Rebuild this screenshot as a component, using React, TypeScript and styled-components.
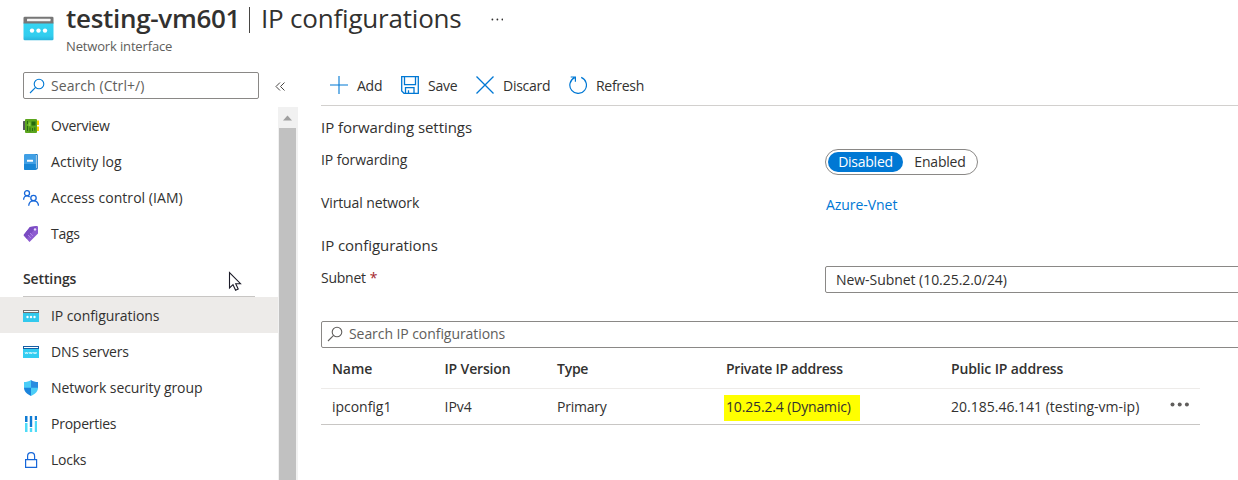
import React from "react";
import styled, { createGlobalStyle } from "styled-components";

const GlobalStyle = createGlobalStyle`
  * { box-sizing: border-box; }
  body {
    margin: 0;
    background: #fff;
    color: #323130;
    font: 14px/20px "Open Sans", "Segoe UI", sans-serif;
    overflow: hidden;
  }
`;

const Text = styled.span<{ $track?: number }>`
  letter-spacing: ${(p) => p.$track ?? -0.25}px;
  white-space: nowrap;
`;

const Page = styled.div`
  width: 1238px;
  height: 480px;
  overflow: hidden;
  position: relative;
  display: flex;
  flex-direction: column;
`;

const Header = styled.header`
  height: 64px;
  flex: none;
  display: flex;
  padding-left: 23px;
`;

const HeaderIcon = styled.div`
  width: 43px;
  padding-top: 16px;
`;

const Titles = styled.div`
  display: flex;
  flex-direction: column;
`;

const Title = styled.h1`
  margin: 0;
  height: 37px;
  font-size: 26px;
  line-height: 37px;
  font-weight: 400;
  display: flex;
`;

const TitleName = styled(Text)`
  font-weight: 600;
  width: 181px;
`;

const TitleBar = styled.i`
  width: 1px;
  height: 26px;
  margin: 7px 11px 0 2px;
  background: #484644;
`;

const Subtitle = styled(Text)`
  font-size: 13px;
  line-height: 18px;
  color: #605e5c;
`;

const HeaderMore = styled.div`
  padding: 17px 0 0 29px;
  line-height: 0;
  svg { display: block; }
`;

const Body = styled.div`
  flex: 1;
  display: flex;
  min-height: 0;
`;

const Sidebar = styled.aside`
  width: 298px;
  flex: none;
  display: flex;
  flex-direction: column;
`;

const SearchRow = styled.div`
  height: 43px;
  flex: none;
  display: flex;
  padding: 8px 0 0 23px;
`;

const SearchBox = styled.div<{ $wide?: boolean }>`
  width: ${(p) => (p.$wide ? "930px" : "236px")};
  height: 27px;
  flex: none;
  border: 1px solid #8a8886;
  border-radius: 2px;
  display: flex;
  align-items: center;
  padding: 0 0 ${(p) => (p.$wide ? 1 : 0)}px 5px;
  gap: 6px;
  color: #605e5c;
`;

const Collapse = styled.div`
  padding: 9px 0 0 16px;
  line-height: 0;
`;

const MenuArea = styled.div`
  flex: 1;
  display: flex;
  min-height: 0;
`;

const Menu = styled.nav`
  width: 278px;
  padding-top: 1px;
  overflow: hidden;
`;

const MenuItem = styled.div<{ $selected?: boolean; $nested?: boolean }>`
  height: 36px;
  padding: ${(p) => (p.$nested ? 2 : 0)}px 0 0 23px;
  display: flex;
  align-items: center;
  gap: 12px;
  background: ${(p) => (p.$selected ? "#edebe9" : "transparent")};
`;

const MenuIcon = styled.svg`
  width: 16px;
  height: 16px;
  flex: none;
`;

const MenuHeading = styled.div`
  height: 45px;
  margin: 0 23px 0 23px;
  padding-top: 17px;
  border-bottom: 1px solid #c8c6c4;
  font-weight: 600;
`;

const ScrollTrack = styled.div`
  width: 20px;
  background: #f1f1f1;
  padding: 0 2px 0 1px;
  display: flex;
  flex-direction: column;
`;

const ScrollArrow = styled.svg`
  width: 17px;
  height: 21px;
`;

const ScrollThumb = styled.div`
  flex: 1;
  background: #c1c1c1;
`;

const Main = styled.main`
  flex: 1;
  min-width: 0;
  padding-left: 23px;
  display: flex;
  flex-direction: column;
`;

const Toolbar = styled.div`
  height: 42px;
  flex: none;
  border-bottom: 1px solid #d2d0ce;
  display: flex;
  align-items: center;
  padding: 1px 0 0 9px;
`;

const Command = styled.div<{ $width: number }>`
  width: ${(p) => p.$width}px;
  height: 20px;
  display: flex;
  align-items: center;
  gap: 9px;
  svg { flex: none; }
  span { padding-top: 1px; }
`;

const SectionTitle = styled.div`
  margin-top: 10px;
  height: 23px;
  flex: none;
  font-size: 15px;
  line-height: 22px;
`;

const Field = styled.div<{ $height: number; $shift?: number }>`
  height: ${(p) => p.$height}px;
  flex: none;
  display: grid;
  grid-template-columns: 504px 1fr;
  padding-top: ${(p) => p.$shift ?? 0}px;
`;

const FieldLabel = styled.span<{ $drop?: number }>`
  padding-top: ${(p) => p.$drop ?? 0}px;
`;

const Required = styled.span`
  color: #a4262c;
  margin-left: 4px;
`;

const Toggle = styled.div`
  width: 153px;
  height: 26px;
  border: 1px solid #8a8886;
  border-radius: 13px;
  padding: 2px;
  display: flex;
`;

const ToggleOption = styled.div<{ $on?: boolean }>`
  width: ${(p) => (p.$on ? 75 : 74)}px;
  flex: none;
  height: 20px;
  border-radius: 10px;
  text-align: center;
  line-height: 20px;
  background: ${(p) => (p.$on ? "#0078d4" : "transparent")};
  color: ${(p) => (p.$on ? "#fff" : "#323130")};
`;

const Link = styled(Text)`
  color: #0078d4;
  padding: 2px 0 0 1px;
`;

const Select = styled.div`
  width: 430px;
  height: 27px;
  border: 1px solid #8a8886;
  border-radius: 2px;
  padding-left: 10px;
  line-height: 26px;
`;

const Table = styled.div`
  width: 879px;
  flex: none;
`;

const Row = styled.div<{ $head?: boolean }>`
  display: grid;
  grid-template-columns: 112.5px 112.5px 169px 225px 219px 1fr;
  align-items: center;
  height: ${(p) => (p.$head ? 41 : 36)}px;
  padding: ${(p) => (p.$head ? 2 : 0)}px 0 0 11px;
  font-weight: ${(p) => (p.$head ? 600 : 400)};
  border-bottom: 1px solid ${(p) => (p.$head ? "#edebe9" : "#c8c6c4")};
`;

const RowMore = styled.div`
  height: 9px;
  line-height: 0;
  svg { display: block; }
`;

const Highlight = styled.div`
  width: 136px;
  height: 26px;
  margin-left: -2px;
  padding-left: 2px;
  line-height: 24px;
  background: #ffff00;
  position: relative;
  top: 1px;
`;

const Cursor = styled.svg`
  position: absolute;
  left: 228px;
  top: 271px;
`;

const Magnifier = ({ color }: { color: string }) => (
  <svg width="16" height="16" viewBox="0 0 16 16" fill="none" stroke={color} strokeWidth="1.1">
    <circle cx="10" cy="6" r="4.8" />
    <path d="M6.6 9.4 1 15" />
  </svg>
);

const Dots = ({ r, gap, color }: { r: number; gap: number; color: string }) => (
  <svg width={gap * 2 + r * 2 + 1} height="5" fill={color}>
    {[0, 1, 2].map((i) => (
      <circle key={i} cx={r + 0.5 + i * gap} cy="2.5" r={r} />
    ))}
  </svg>
);

const WindowIcon = () => (
  <svg width="31" height="25" viewBox="0 0 31 25">
    <defs>
      <linearGradient id="win" x1="0" y1="0" x2="0" y2="1">
        <stop offset="0" stopColor="#35d6f3" />
        <stop offset=".75" stopColor="#32cdee" />
        <stop offset="1" stopColor="#28b3dc" />
      </linearGradient>
    </defs>
    <path d="M.5 6.500h30V23q0 1.300-1.300 1.300H1.800Q.5 24.300.5 23z" fill="url(#win)" />
    <path d="M.5 7.500V2Q.5.700 1.800.700h27.400q1.300 0 1.300 1.300v5.500z" fill="#767676" />
    <rect x="4" y="2.700" width="23.500" height="2.500" rx=".5" fill="#f4f4f4" />
    <g fill="#fff">
      <circle cx="9" cy="14.600" r="2.200" />
      <circle cx="15.500" cy="14.600" r="2.200" />
      <circle cx="22" cy="14.600" r="2.200" />
    </g>
  </svg>
);

const icons = {
  overview: (
    <MenuIcon viewBox="0 0 16 16">
      <rect x="0" y="3" width="3" height="9" rx=".5" fill="#54585c" />
      <path d="M12 2.500h4v4.500h-4zM12 8.500h4v4.500h-4z" fill="#f8d000" />
      <rect x="2" y="1" width="12" height="14" rx="1" fill="#5ba51e" />
      <path d="M8.500 3.500h4v4h-4z" fill="#24680f" />
      <path d="M4.500 3v3M4.500 8v5M7 9.500v4M9.500 10v3M11.800 9.500v3" stroke="#276b12" />
      <path d="M5.500 4.500h2v3.500h-2z" fill="#8bcf45" />
    </MenuIcon>
  ),
  log: (
    <MenuIcon viewBox="0 0 16 16">
      <path d="M3 0h10.800q1 0 1 1v13q0 1-1 1.500L12 16z" fill="#1878c0" />
      <path d="M12.500 1h1.200v13l-1.200.8z" fill="#d9eefb" />
      <path d="M2.200 0H12q.8 0 .8.800v14.400q0 .800-.8.800H2.200Q1 16 1 14.800V1.200Q1 0 2.200 0z" fill="#3f9fe5" />
      <path d="M1 10h11.800v5.200q0 .800-.8.800H2.200Q1 16 1 14.800z" fill="#1785d5" />
      <rect x="4" y="5.700" width="6" height="2" rx=".3" fill="#fff" />
    </MenuIcon>
  ),
  access: (
    <MenuIcon viewBox="0 0 16 16" fill="none" stroke="#1667d9" strokeWidth="1.300">
      <circle cx="4" cy="3.200" r="2.500" />
      <path d="M.6 9.800C.6 7.300 2 5.800 4 5.800c1.200 0 2 .5 2.600 1.200" />
      <circle cx="10.500" cy="8" r="2.700" />
      <path d="M5.700 15.800c.2-3.200 2-5 4.800-5s4.800 1.800 5 5" />
    </MenuIcon>
  ),
  tags: (
    <MenuIcon viewBox="0 0 16 16">
      <path d="M6.900 1 14.200.1 15 .8V7.600L6.500 16 .8 9.600q-.3-.6.2-1.200z" fill="#8d5bd0" />
      <path d="m1 8.400 5.900-7.400 7.300-.9L3.700 12.800.8 9.600q-.3-.6.200-1.200z" fill="#7a4bc2" />
      <circle cx="12" cy="3.400" r="1.200" fill="#e8dcfb" />
      <path d="m5 9 3 3M7 7l3 3" stroke="#ad83e5" />
    </MenuIcon>
  ),
  ip: (
    <MenuIcon viewBox="0 0 16 16">
      <path d="M0 4h16v10H0z" fill="#33c9ed" />
      <path d="M0 2h16v3H0z" fill="#6f6f6f" />
      <path d="M1 3h14v1H1z" fill="#fff" />
      <g fill="#fff">
        <circle cx="4.500" cy="9" r="1.200" />
        <circle cx="8" cy="9" r="1.200" />
        <circle cx="11.500" cy="9" r="1.200" />
      </g>
    </MenuIcon>
  ),
  dns: (
    <MenuIcon viewBox="0 0 16 16">
      <path d="M0 4h16v10H0z" fill="#33cdf1" />
      <path d="M0 2h16v3H0z" fill="#155ea5" />
      <path d="M1 3h14v1H1z" fill="#fff" />
      <path
        d="m2 8 .8 2 .8-2 .8 2 .8-2m1 0 .8 2 .8-2 .8 2 .8-2m1 0 .8 2 .8-2 .8 2 .8-2"
        fill="none"
        stroke="#d8f7ff"
        strokeWidth=".8"
      />
    </MenuIcon>
  ),
  shield: (
    <MenuIcon viewBox="0 0 16 16">
      <path d="M8 0C6 1.500 3.500 2 1 2v6h7z" fill="#4bcdf7" />
      <path d="M8 0c2 1.500 4.500 2 7 2v6H8z" fill="#2a8de0" />
      <path d="M1 7.800c0 4 3.500 6.500 7 8.200V7.800z" fill="#1b84dc" />
      <path d="M15 7.800c0 4-3.500 6.500-7 8.200V7.800z" fill="#4bcdf7" />
    </MenuIcon>
  ),
  properties: (
    <MenuIcon viewBox="0 0 16 16">
      <path d="M2 0h2.500v6H2zM6.800 0h2.400v11H6.800zM11.800 0H14v4h-2.200z" fill="#0f7bd3" />
      <path d="M2 7h2.500v9H2zM6.800 12h2.400v4H6.800zM11.800 5H14v11h-2.200z" fill="#4fdcf8" />
    </MenuIcon>
  ),
  lock: (
    <MenuIcon viewBox="0 0 16 16" fill="none" stroke="#1667d9" strokeWidth="1.200">
      <path d="M2.600 7.600h11v7.800h-11z" />
      <path d="M4.600 7.500V4.200C4.600 2 6 .6 8.100.6s3.500 1.400 3.500 3.600v3.300" />
    </MenuIcon>
  ),
};

type Entry = { icon: keyof typeof icons; label: string; track?: number; selected?: boolean };

const topItems: Entry[] = [
  { icon: "overview", label: "Overview" },
  { icon: "log", label: "Activity log", track: 0.08 },
  { icon: "access", label: "Access control (IAM)", track: 0.05 },
  { icon: "tags", label: "Tags" },
];

const settingItems: Entry[] = [
  { icon: "ip", label: "IP configurations", selected: true, track: -0.09 },
  { icon: "dns", label: "DNS servers", track: -0.15 },
  { icon: "shield", label: "Network security group", track: -0.07 },
  { icon: "properties", label: "Properties" },
  { icon: "lock", label: "Locks" },
];

const renderItem = (e: Entry, nested: boolean) => (
  <MenuItem key={e.label} $selected={e.selected} $nested={nested}>
    {icons[e.icon]}
    <Text $track={e.track}>{e.label}</Text>
  </MenuItem>
);

export default function App() {
  return (
    <Page>
      <GlobalStyle />
      <Header>
        <HeaderIcon>
          <WindowIcon />
        </HeaderIcon>
        <Titles>
          <Title>
            <TitleName $track={-0.3}>testing-vm601</TitleName>
            <TitleBar />
            <Text $track={-0.2}>IP configurations</Text>
            <HeaderMore>
              <Dots r={0.9} gap={5} color="#323130" />
            </HeaderMore>
          </Title>
          <Subtitle $track={-0.15}>Network interface</Subtitle>
        </Titles>
      </Header>
      <Body>
        <Sidebar>
          <SearchRow>
            <SearchBox>
              <Magnifier color="#0078d4" />
              <Text $track={0.07}>Search (Ctrl+/)</Text>
            </SearchBox>
            <Collapse>
              <svg width="11" height="11" fill="none" stroke="#484644">
                <path d="M5 1.500 1 5.500l4 4M9.500 1.500l-4 4 4 4" />
              </svg>
            </Collapse>
          </SearchRow>
          <MenuArea>
            <Menu>
              {topItems.map((e) => renderItem(e, false))}
              <MenuHeading>
                <Text $track={-0.12}>Settings</Text>
              </MenuHeading>
              {settingItems.map((e) => renderItem(e, true))}
            </Menu>
            <ScrollTrack>
              <ScrollArrow viewBox="0 0 17 21">
                <path d="M4 13.500 8.500 8.500l4.500 5z" fill="#a0a0a0" />
              </ScrollArrow>
              <ScrollThumb />
            </ScrollTrack>
          </MenuArea>
        </Sidebar>
        <Main>
          <Toolbar>
            <Command $width={71}>
              <svg width="18" height="18" stroke="#0078d4" strokeWidth="1.100">
                <path d="M9 0v18M0 9h18" />
              </svg>
              <Text>Add</Text>
            </Command>
            <Command $width={75}>
              <svg width="18" height="18" fill="none" stroke="#0078d4" strokeWidth="1.300">
                <path d="M.7.700h16.600v16.600H3L.7 15zM3.500.700v8h11v-8M4.500 17v-5.300h8.500V17M7.500 17v-2.700" />
              </svg>
              <Text>Save</Text>
            </Command>
            <Command $width={93}>
              <svg width="18" height="18" fill="none" stroke="#0078d4" strokeWidth="1.300">
                <path d="m.5.500 17 17M17.500.500l-17 17" />
              </svg>
              <Text>Discard</Text>
            </Command>
            <Command $width={80}>
              <svg width="18" height="18" fill="none" stroke="#0078d4" strokeWidth="1.200">
                <path d="M12.200 1.400A8.300 8.300 0 1 1 5.600 1.600M1.700 1h4.700v4.700" />
              </svg>
              <Text $track={-0.3}>Refresh</Text>
            </Command>
          </Toolbar>
          <SectionTitle>
            <Text $track={-0.05}>IP forwarding settings</Text>
          </SectionTitle>
          <Field $height={43} $shift={10}>
            <FieldLabel $drop={1}>
              <Text $track={-0.1}>IP forwarding</Text>
            </FieldLabel>
            <Toggle>
              <ToggleOption $on>
                <Text>Disabled</Text>
              </ToggleOption>
              <ToggleOption>
                <Text $track={-0.2}>Enabled</Text>
              </ToggleOption>
            </Toggle>
          </Field>
          <Field $height={42} $shift={11}>
            <FieldLabel>
              <Text $track={-0.12}>Virtual network</Text>
            </FieldLabel>
            <Link $track={-0.05}>Azure-Vnet</Link>
          </Field>
          <SectionTitle>
            <Text $track={-0.05}>IP configurations</Text>
          </SectionTitle>
          <Field $height={64} $shift={9}>
            <FieldLabel $drop={2}>
              <Text>Subnet</Text>
              <Required>*</Required>
            </FieldLabel>
            <Select>
              <Text $track={-0.05}>New-Subnet (10.25.2.0/24)</Text>
            </Select>
          </Field>
          <SearchBox $wide>
            <Magnifier color="#605e5c" />
            <Text $track={-0.07}>Search IP configurations</Text>
          </SearchBox>
          <Table>
            <Row $head>
              <Text $track={-0.1}>Name</Text>
              <Text $track={-0.15}>IP Version</Text>
              <Text>Type</Text>
              <Text>Private IP address</Text>
              <Text $track={-0.13}>Public IP address</Text>
            </Row>
            <Row>
              <Text $track={-0.03}>ipconfig1</Text>
              <Text $track={0}>IPv4</Text>
              <Text>Primary</Text>
              <Highlight>
                <Text $track={-0.15}>10.25.2.4 (Dynamic)</Text>
              </Highlight>
              <Text $track={0}>20.185.46.141 (testing-vm-ip)</Text>
              <RowMore>
                <Dots r={2} gap={7.2} color="#605e5c" />
              </RowMore>
            </Row>
          </Table>
        </Main>
      </Body>
      <Cursor width="14" height="21" viewBox="0 0 14 21">
        <path
          d="M1.500 1.500v15.500l3.500-3.300 2.600 5.600 2.600-1.200-2.500-5.400h4.800z"
          fill="#fff"
          stroke="#1b1b28"
          strokeWidth="1.100"
        />
      </Cursor>
    </Page>
  );
}
